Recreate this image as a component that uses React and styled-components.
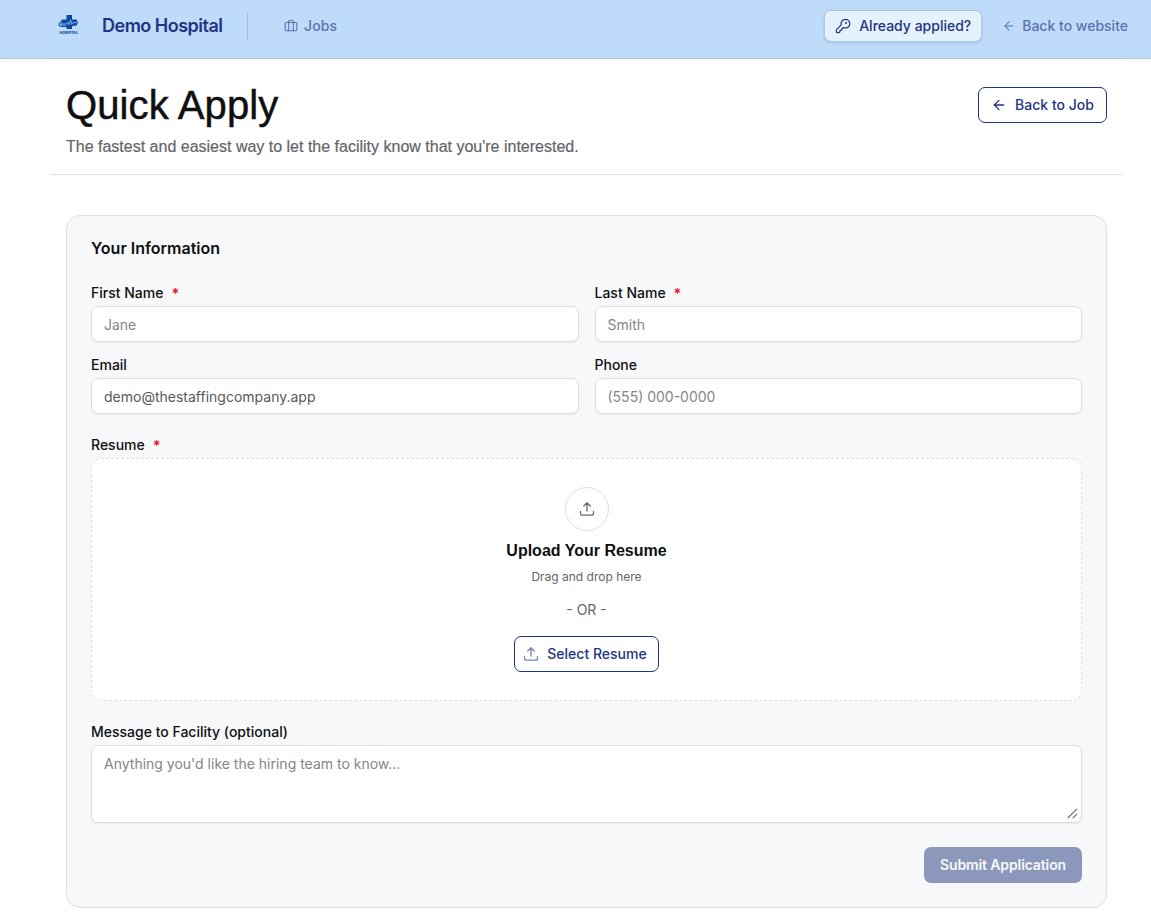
import React from 'react';
import styled, { createGlobalStyle } from 'styled-components';
import { ArrowLeft, Briefcase } from 'lucide-react';

const GlobalStyle = createGlobalStyle`
  * {
    box-sizing: border-box;
  }
  body {
    margin: 0;
    height: 913px;
    overflow: hidden;
    background: #fff;
    color: #0f0f10;
    font-family: Inter, "Liberation Sans", sans-serif;
    font-size: 14px;
    line-height: 20px;
  }
  input, textarea, button {
    font: inherit;
  }
`;

const Header = styled.header`
  display: flex;
  align-items: center;
  justify-content: space-between;
  height: 59px;
  padding: 0 23px 6px 57px;
  background: #bfdbfa;
  border-bottom: 1px solid #a9c9ec;
  box-shadow: 0 4px 12px rgba(0, 0, 0, 0.02);
`;

const HeaderGroup = styled.div`
  display: flex;
  align-items: center;
`;

const Brand = styled.span`
  width: 121px;
  margin-left: 21px;
  font-size: 18px;
  font-weight: 600;
  letter-spacing: -0.5px;
  white-space: nowrap;
  color: #1e357f;
`;

const Divider = styled.span`
  width: 1px;
  height: 28px;
  margin: 0 36px 0 24px;
  background: #a3c0e5;
`;

const NavLink = styled.a`
  display: flex;
  align-items: center;
  gap: 6px;
  font-weight: 500;
  color: #5a72ae;
  letter-spacing: ${(props) => props.$spacing || 0}px;
`;

const AppliedButton = styled.button`
  display: flex;
  align-items: center;
  gap: 8px;
  width: 158px;
  height: 32px;
  margin-right: 20px;
  padding: 0 10px;
  border: 1px solid #b0c7e5;
  border-radius: 7px;
  background: #e5f1fd;
  color: #1e357f;
  font-weight: 500;
  white-space: nowrap;
  box-shadow: 0 1px 3px rgba(30, 53, 127, 0.18);
`;

const Intro = styled.section`
  position: relative;
  display: flex;
  justify-content: space-between;
  align-items: flex-start;
  width: 1073px;
  height: 116px;
  margin-left: 50px;
  padding: 28px 16px 0;
  background: #fff;
  border-bottom: 1px solid #dfdfe0;
`;

const Title = styled.h1`
  margin: -5px 0 0;
  font-family: "Liberation Sans", Arial, sans-serif;
  font-size: 40px;
  font-weight: 400;
  line-height: 46px;
  letter-spacing: 0.1px;
  -webkit-text-stroke: 0.5px currentColor;
`;

const Subtitle = styled.p`
  margin: 7px 0 0;
  font-family: "Liberation Sans", Arial, sans-serif;
  font-size: 16px;
  line-height: 24px;
  color: #656567;
  -webkit-text-stroke: 0.2px currentColor;
`;

const OutlineButton = styled.button`
  display: flex;
  align-items: center;
  justify-content: center;
  gap: 8px;
  width: ${(props) => props.$width}px;
  height: 36px;
  padding: 0 ${(props) => props.$shift || 0}px 0 0;
  border: 1px solid #1e357f;
  border-radius: 7px;
  background: #fff;
  color: #1e357f;
  font-weight: 500;
  svg {
    opacity: ${(props) => props.$iconOpacity || 1};
  }
`;

const Card = styled.form`
  width: 1041px;
  height: 693px;
  margin: 40px 0 0 66px;
  padding: 20px 24px;
  border: 1px solid #dfdfe1;
  border-radius: 14px;
  background: #f7f8fa;
`;

const CardTitle = styled.h2`
  margin: 0 0 23px;
  font-size: 16px;
  font-weight: 600;
  line-height: 24px;
`;

const FieldGrid = styled.div`
  display: grid;
  grid-template-columns: 1fr 1fr;
  gap: 13px 16px;
`;

const Label = styled.label`
  display: flex;
  gap: 8px;
  height: 20px;
  margin-bottom: 3px;
  font-weight: 500;
`;

const Required = styled.span`
  padding-top: 1px;
  font-weight: 700;
  color: #f0142f;
`;

const Input = styled.input`
  display: block;
  width: 100%;
  height: 36px;
  padding: 1px 12px 0;
  border: 1px solid #dddddf;
  border-radius: 7px;
  background: #fff;
  color: #58585a;
  outline: none;
  box-shadow: 0 1px 2px rgba(0, 0, 0, 0.06);
  &::placeholder {
    color: #858587;
  }
`;

const Section = styled.div`
  margin-top: ${(props) => props.$top}px;
`;

const DropZone = styled.div`
  display: flex;
  flex-direction: column;
  align-items: center;
  height: 243px;
  padding-top: 28px;
  border: 1px dashed #dedee0;
  border-radius: 10px;
  background: #fff;
`;

const UploadCircle = styled.div`
  display: flex;
  align-items: center;
  justify-content: center;
  width: 44px;
  height: 44px;
  border: 1px solid #dfdfe1;
  border-radius: 50%;
  color: #6b6b6d;
`;

const UploadTitle = styled.h3`
  margin: 8px 0 0;
  font-family: "Liberation Sans", Arial, sans-serif;
  font-size: 16px;
  font-weight: 700;
  line-height: 24px;
`;

const Hint = styled.p`
  margin: 6px 0 0;
  font-size: 12px;
  line-height: 16px;
  color: #656567;
`;

const Or = styled.p`
  margin: 15px 0 16px;
  color: #656567;
`;

const MessageBox = styled.div`
  position: relative;
`;

const Message = styled.textarea`
  display: block;
  width: 991px;
  height: 78px;
  padding: 8px 12px;
  border: 1px solid #dddddf;
  border-radius: 7px;
  background: #fff;
  outline: none;
  resize: none;
  box-shadow: 0 1px 2px rgba(0, 0, 0, 0.06);
  &::placeholder {
    color: #858587;
  }
`;

const Grip = styled.svg`
  position: absolute;
  right: 4px;
  bottom: 4px;
`;

const Submit = styled.button`
  display: block;
  width: 158px;
  height: 36px;
  margin: 24px 0 0 auto;
  padding: 0;
  border: 0;
  border-radius: 7px;
  background: #8b98bb;
  color: #f7f8fb;
  font-weight: 600;
  letter-spacing: -0.12px;
`;

const HospitalLogo = () => (
  <svg width="24" height="24" viewBox="-1 0 24 24" fill="none">
    <path d="M8.5 1h5.5v4.5h5v6h-5v3.5H8.5v-3.5H3.5v-6h5z" fill="#0b4aa2" />
    <path d="M7 6.6C-1 8.9-.5 12.7 6 12.5c6 0 12-1.3 14-4.3" stroke="#0b4aa2" strokeWidth="1.2" />
    <path d="M3.5 10h5l1.2-1.6 1.2 2.4L12.5 5.9l1.3 4.4 1.2-1.7h4" stroke="#bfdbfa" strokeWidth="0.7" />
    <text x="1.5" y="20" fill="#0b4aa2" fontSize="4" fontWeight="800" textLength="18.5" lengthAdjust="spacingAndGlyphs">HOSPITAL</text>
  </svg>
);

const KeyIcon = () => (
  <svg width="16" height="16" viewBox="0 0 24 24" fill="none" stroke="currentColor" strokeWidth="1.8" strokeLinecap="round" strokeLinejoin="round">
    <path d="M15.5 2a6.5 6.5 0 0 0-6.2 8.4L2.7 17A2.4 2.4 0 0 0 2 18.7V20a2 2 0 0 0 2 2h1.5a2 2 0 0 0 2-2v-1.5H9a1.5 1.5 0 0 0 1.5-1.5v-1.5l2.8-1A6.5 6.5 0 1 0 15.5 2z" />
    <circle cx="16.5" cy="7.5" r="0.6" fill="currentColor" />
  </svg>
);

const UploadIcon = () => (
  <svg width="16" height="16" viewBox="0 0 16 16" fill="none" stroke="currentColor" strokeWidth="1.3" strokeLinecap="round" strokeLinejoin="round">
    <path d="M1.5 10.3v1.9a2 2 0 0 0 2 2h9a2 2 0 0 0 2-2v-1.9M8 10V1.8M4.8 5 8 1.8 11.2 5" />
  </svg>
);

const Field = ({ label, required, ...rest }) => (
  <div>
    <Label>{label} {required && <Required>*</Required>}</Label>
    <Input {...rest} />
  </div>
);

const App = () => {
  return (
    <>
      <GlobalStyle />
      <Header>
        <HeaderGroup>
          <HospitalLogo />
          <Brand>Demo Hospital</Brand>
          <Divider />
          <NavLink $spacing={0.15}><Briefcase size={14} strokeWidth={1.8} />Jobs</NavLink>
        </HeaderGroup>
        <HeaderGroup>
          <AppliedButton><KeyIcon />Already applied?</AppliedButton>
          <NavLink><ArrowLeft size={14} strokeWidth={1.8} />Back to website</NavLink>
        </HeaderGroup>
      </Header>
      <Intro>
        <div>
          <Title>Quick Apply</Title>
          <Subtitle>The fastest and easiest way to let the facility know that you're interested.</Subtitle>
        </div>
        <OutlineButton $width={129}><ArrowLeft size={16} strokeWidth={1.9} />Back to Job</OutlineButton>
      </Intro>
      <Card onSubmit={(e) => e.preventDefault()}>
        <CardTitle>Your Information</CardTitle>
        <FieldGrid>
          <Field label="First Name" required placeholder="Jane" />
          <Field label="Last Name" required placeholder="Smith" />
          <Field label="Email" defaultValue="demo@thestaffingcompany.app" />
          <Field label="Phone" placeholder="(555) 000-0000" />
        </FieldGrid>
        <Section $top={21}>
          <Label>Resume <Required>*</Required></Label>
          <DropZone>
            <UploadCircle><UploadIcon /></UploadCircle>
            <UploadTitle>Upload Your Resume</UploadTitle>
            <Hint>Drag and drop here</Hint>
            <Or>- OR -</Or>
            <OutlineButton type="button" $width={145} $shift={3} $iconOpacity={0.6}><UploadIcon />Select Resume</OutlineButton>
          </DropZone>
        </Section>
        <Section $top={21}>
          <Label>Message to Facility (optional)</Label>
          <MessageBox>
            <Message placeholder="Anything you'd like the hiring team to know..." />
            <Grip width="11" height="11" viewBox="0 0 11 11" stroke="#6f6f71" strokeWidth="1.1">
              <path d="M.8 10 10 .8M5.8 10 10 5.8" />
            </Grip>
          </MessageBox>
        </Section>
        <Submit>Submit Application</Submit>
      </Card>
    </>
  );
};

export default App;
